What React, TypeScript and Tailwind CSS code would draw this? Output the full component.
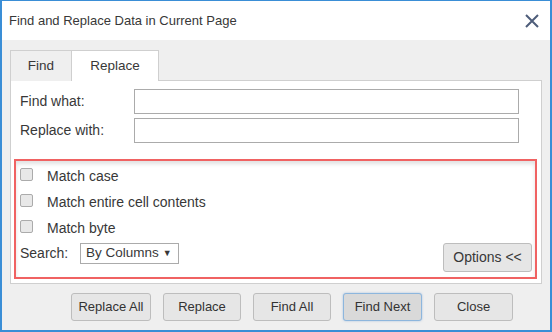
import React from "react";

const btn =
  "h-[28px] rounded-[3px] border border-[#bdbdbd] bg-[#e6e6e6] text-[13px] text-[#333]";

function Check({ label }: { label: string }) {
  return (
    <label className="flex h-[26px] items-center">
      <span className="mb-[4px] h-[13px] w-[13px] rounded-[2px] border border-[#ababab] bg-[#e8e8e8]" />
      <span className="ml-[14px]">{label}</span>
    </label>
  );
}

export default function App() {
  return (
    <div
      className="flex h-[332px] w-[552px] flex-col border-2 border-t border-[#3a8ed6] bg-[#efefef] text-[14px] text-[#383838]"
      style={{ fontFamily: '"Liberation Sans", Arial, sans-serif' }}
    >
      <div className="flex h-[39px] items-center justify-between bg-white pl-[7px] pr-[11px] pt-[1px] text-[13px]">
        <span>Find and Replace Data in Current Page</span>
        <svg width="14" height="14" viewBox="0 0 14 14">
          <path d="M1 1L13 13M13 1L1 13" stroke="#4e5d7a" strokeWidth="2" />
        </svg>
      </div>

      <div className="flex flex-1 flex-col px-2 pt-[10px]">
        <div className="relative z-10 -mb-px flex h-[31px] text-[13.5px]">
          <div className="flex w-[62px] items-center justify-center border border-b-0 border-[#cfcfcf] bg-[#efefef]">
            Find
          </div>
          <div className="flex w-[87px] items-center justify-center border border-b-0 border-l-0 border-[#cfcfcf] bg-white">
            Replace
          </div>
        </div>

        <div className="flex flex-col border border-[#cfcfcf] bg-white pt-[8px]">
          <div className="flex items-center pl-[9px]">
            <span className="w-[114px]">Find what:</span>
            <input className="h-[25px] w-[385px] border border-[#ababab] outline-none" />
          </div>
          <div className="mt-[4px] flex items-center pl-[9px]">
            <span className="w-[114px]">Replace with:</span>
            <input className="h-[25px] w-[385px] border border-[#ababab] outline-none" />
          </div>

          <div className="mb-[4px] ml-[3px] mr-[4px] mt-[16px] flex h-[120px] flex-col border-2 border-[#f06262] pl-[4px] pr-[3px] pt-[2px] shadow-[inset_0_3px_4px_rgba(0,0,0,0.12)]">
            <Check label="Match case" />
            <Check label="Match entire cell contents" />
            <Check label="Match byte" />
            <div className="mt-[2px] flex items-start justify-between">
              <div className="flex items-center">
                <span className="w-[60px]">Search:</span>
                <div className="flex h-[21px] w-[99px] items-center gap-[4px] border border-[#ababab] bg-white pl-[5px] text-[13.5px]">
                  <span>By Columns</span>
                  <span className="text-[9px]">▼</span>
                </div>
              </div>
              <button className="h-[29px] w-[89px] rounded-[3px] border border-[#bdbdbd] bg-[#e6e6e6] text-[14px] text-[#383838]">
                Options &lt;&lt;
              </button>
            </div>
          </div>
        </div>

        <div className="mt-[9px] flex justify-end gap-[12px] pr-[29px]">
          <button className={`${btn} w-[80px]`}>Replace All</button>
          <button className={`${btn} w-[78px]`}>Replace</button>
          <button className={`${btn} w-[78px]`}>Find All</button>
          <button className="h-[28px] w-[79px] rounded-[3px] border border-[#8db6dd] bg-[#d9d9d9] text-[13px] text-[#333] shadow-[0_0_2px_rgba(80,140,210,0.5)]">
            Find Next
          </button>
          <button className={`${btn} w-[79px]`}>Close</button>
        </div>
      </div>
    </div>
  );
}
